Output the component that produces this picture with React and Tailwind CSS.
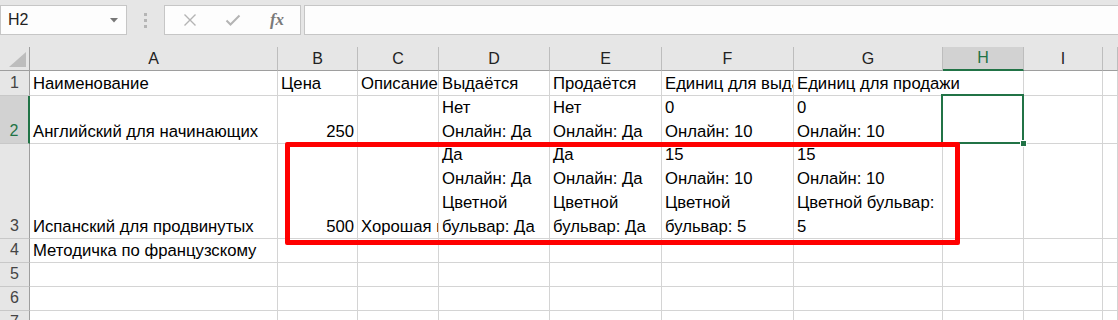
import React from 'react';

// column headers with widths matching the sheet
const columns = ['A', 'B', 'C', 'D', 'E', 'F', 'G', 'H', 'I', ''];

const font = "font-['Liberation_Sans',Arial,sans-serif]";

function Cell({ lines = [], right, className = '' }) {
  return (
    <div
      className={`flex flex-col justify-end overflow-hidden whitespace-nowrap border-r border-b border-[#d4d4d4] text-[16.7px] ${
        right ? 'items-end pr-[3px]' : 'pl-[3px]'
      } ${className}`}
    >
      {lines.map((line, i) => (
        <div key={i} className="leading-[24px] translate-y-[1px]">
          {line}
        </div>
      ))}
    </div>
  );
}

function RowHead({ n, active }) {
  return (
    <div
      className={`flex items-end justify-center border-b border-[#c8c8c8] leading-[24px] ${
        active
          ? 'bg-[#d2d2d2] text-[#217346] border-r-2 border-r-[#217346]'
          : 'bg-[#e6e6e6] text-[#444] border-r border-r-[#9e9e9e]'
      }`}
    >
      {n}
    </div>
  );
}

export default function App() {
  return (
    <div className={`w-[1118px] h-[320px] overflow-hidden bg-white text-[16px] text-black ${font}`}>
      {/* FORMULA BAR */}
      <div className="flex h-[47px] items-start gap-0 bg-[#e6e6e6] pt-[5px]">
        <div className="flex h-[30px] w-[127px] items-center justify-between border border-[#c6c6c6] bg-[#fdfdfd] pl-[7px] pr-[8px] text-[#222]">
          <span>H2</span>
          <svg width="8" height="5" viewBox="0 0 8 5">
            <polygon points="0,0 8,0 4,4.5" fill="#777" />
          </svg>
        </div>
        <div className="flex h-[30px] w-[37px] flex-col items-center justify-center gap-[3px]">
          <span className="block h-[3px] w-[3px] bg-[#b5b5b5]" />
          <span className="block h-[3px] w-[3px] bg-[#b5b5b5]" />
          <span className="block h-[3px] w-[3px] bg-[#b5b5b5]" />
        </div>
        <div className="flex h-[30px] w-[137px] items-center border border-[#c6c6c6] bg-[#fdfdfd]">
          <div className="flex w-[46px] justify-center pl-[4px]">
            <svg width="14" height="14" viewBox="0 0 14 14">
              <path d="M1.5 1.5 L12.5 12.5 M12.5 1.5 L1.5 12.5" stroke="#b4b4b4" strokeWidth="1.4" fill="none" />
            </svg>
          </div>
          <div className="flex w-[44px] justify-center">
            <svg width="16" height="14" viewBox="0 0 16 14">
              <path d="M1.5 7.5 L5.5 11.5 L14.5 2.5" stroke="#b4b4b4" strokeWidth="2" fill="none" />
            </svg>
          </div>
          <div className="flex w-[44px] justify-center">
            <span className="font-['Liberation_Serif',serif] text-[17px] font-bold italic text-[#7a7a7a]">fx</span>
          </div>
        </div>
        <div className="ml-[3px] h-[30px] flex-1 border border-r-0 border-[#c6c6c6] bg-[#fdfdfd]" />
      </div>

      {/* SHEET */}
      <div className="relative">
        <div className="grid grid-cols-[30px_248px_80px_81px_111px_112px_132px_149px_81px_79px_1fr] grid-rows-[24px_25px_48px_95px_24px_24px_24px_24px]">
          {/* column header row */}
          <div className="relative border-r border-b border-[#9e9e9e] bg-[#e6e6e6]">
            <svg className="absolute right-[3px] bottom-[3px]" width="17" height="15" viewBox="0 0 17 15">
              <polygon points="17,0 17,15 0,15" fill="#bdbdbd" />
            </svg>
          </div>
          {columns.map((c) => (
            <div
              key={c || 'J'}
              className={`flex items-center justify-center border-r border-r-[#bdbdbd] ${
                c === 'H'
                  ? 'bg-[#d2d2d2] text-[#217346] border-b-2 border-b-[#217346]'
                  : 'bg-[#e6e6e6] text-[#222] border-b border-b-[#9e9e9e]'
              }`}
            >
              {c}
            </div>
          ))}

          {/* row 1 */}
          <RowHead n={1} />
          <Cell lines={['Наименование']} />
          <Cell lines={['Цена']} />
          <Cell lines={['Описание']} />
          <Cell lines={['Выдаётся']} />
          <Cell lines={['Продаётся']} />
          <Cell lines={['Единиц для выдачи']} />
          <Cell lines={['Единиц для продажи']} className="col-span-2 overflow-visible" />
          <Cell />
          <Cell />

          {/* row 2 */}
          <RowHead n={2} active />
          <Cell lines={['Английский для начинающих']} />
          <Cell lines={['250']} right />
          <Cell />
          <Cell lines={['Нет', 'Онлайн: Да']} />
          <Cell lines={['Нет', 'Онлайн: Да']} />
          <Cell lines={['0', 'Онлайн: 10']} />
          <Cell lines={['0', 'Онлайн: 10']} />
          <div className="relative border-r border-b border-[#d4d4d4]">
            <div className="absolute -top-[2px] -left-[2px] -right-[1px] -bottom-[1px] border-2 border-[#217346]" />
            <div className="absolute -right-[4px] -bottom-[4px] h-[7px] w-[7px] border border-white bg-[#217346]" />
          </div>
          <Cell />
          <Cell />

          {/* row 3 */}
          <RowHead n={3} />
          <Cell lines={['Испанский для продвинутых']} />
          <Cell lines={['500']} right />
          <Cell lines={['Хорошая книга']} />
          <Cell lines={['Да', 'Онлайн: Да', 'Цветной', 'бульвар: Да']} />
          <Cell lines={['Да', 'Онлайн: Да', 'Цветной', 'бульвар: Да']} />
          <Cell lines={['15', 'Онлайн: 10', 'Цветной', 'бульвар: 5']} />
          <Cell lines={['15', 'Онлайн: 10', 'Цветной бульвар:', '5']} />
          <Cell />
          <Cell />
          <Cell />

          {/* rows 4-7 */}
          {[4, 5, 6, 7].map((n) => (
            <React.Fragment key={n}>
              <RowHead n={n} />
              <Cell lines={n === 4 ? ['Методичка по французскому'] : []} />
              <Cell />
              <Cell />
              <Cell />
              <Cell />
              <Cell />
              <Cell />
              <Cell />
              <Cell />
              <Cell />
            </React.Fragment>
          ))}
        </div>

        {/* red annotation box */}
        <div className="pointer-events-none absolute left-[285px] top-[95px] h-[103px] w-[675px] rounded-[2px] border-[5px] border-[#ff0000]" />
      </div>
    </div>
  );
}
